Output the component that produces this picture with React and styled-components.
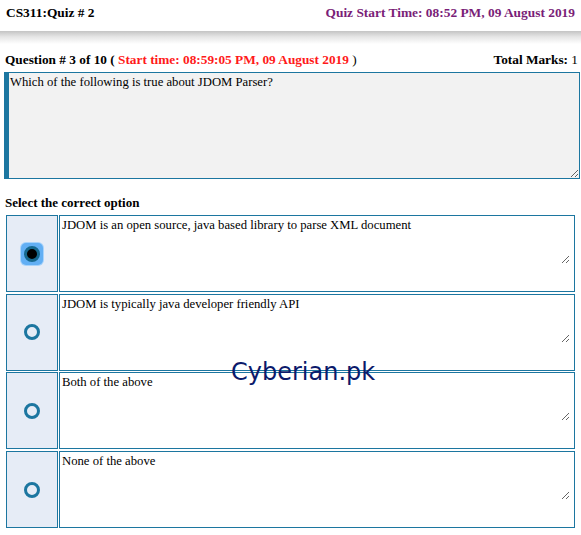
import styled, { createGlobalStyle } from "styled-components";

const Global = createGlobalStyle`
  body {
    margin: 0;
    background: #ffffff;
    font-family: "Liberation Serif", "Times New Roman", serif;
    color: #000;
  }
`;

/* ===== Page ===== */
const Page = styled.div`
  position: relative;
  width: 581px;
`;

/* ===== Top header ===== */
const Header = styled.header`
  display: flex;
  justify-content: space-between;
  align-items: center;
  height: 26px;
  padding: 0 6px 0 6px;
  font-size: 13.4px;
  font-weight: 700;
`;

const QuizTitle = styled.span`
  color: #000;
`;

const QuizTime = styled.span`
  color: #7a1e78;
`;

const ShadowBar = styled.div`
  height: 13px;
  margin-top: 5px;
  background: linear-gradient(180deg, #c4c4c4 0%, #e6e6e6 45%, #ffffff 100%);
`;

/* ===== Question meta ===== */
const MetaRow = styled.div`
  display: flex;
  justify-content: space-between;
  align-items: center;
  margin-top: 8px;
  padding: 0 3px 0 5px;
  font-size: 13.3px;
  font-weight: 700;
  height: 16px;
  color: #000;
`;

const Red = styled.span`
  color: #ff1a1a;
`;

const Plain = styled.span`
  font-weight: 400;
  color: #000;
`;

const QuestionBox = styled.textarea`
  display: block;
  box-sizing: border-box;
  width: 576px;
  height: 107px;
  margin: 4px 0 0 4px;
  padding: 2px 1px;
  border: 1px solid #1c76a0;
  border-left: 5px solid #1c76a0;
  border-radius: 0;
  background: #f2f2f2;
  font-family: "Liberation Serif", "Times New Roman", serif;
  font-size: 12.7px;
  color: #000;
  resize: vertical;
  outline: none;
`;

const SectionLabel = styled.div`
  margin: 16px 0 0 5px;
  font-size: 13px;
  font-weight: 700;
  height: 16px;
`;

/* ===== Options ===== */
const OptionList = styled.div`
  display: flex;
  flex-direction: column;
  gap: 1.7px;
  margin: 4px 0 0 6px;
  width: 569px;
`;

const OptionRow = styled.div`
  display: grid;
  grid-template-columns: 52px 1fr;
  gap: 1px;
  height: 77px;
`;

const RadioCell = styled.div`
  box-sizing: border-box;
  display: flex;
  align-items: center;
  justify-content: center;
  border: 1px solid #1c76a0;
  background: #e6ecf6;
`;

const FocusRing = styled.span`
  display: flex;
  align-items: center;
  justify-content: center;
  width: 22px;
  height: 22px;
  border-radius: 5px;
  background: ${({ $on }) => ($on ? "#62aff4" : "transparent")};
  box-shadow: ${({ $on }) => ($on ? "0 0 0 1px #a8d3fb" : "none")};
`;

const Radio = styled.span`
  box-sizing: border-box;
  display: block;
  width: 16px;
  height: 16px;
  border-radius: 50%;
  border: 3px solid ${({ $checked }) => ($checked ? "#16688e" : "#1c76a0")};
  background: ${({ $checked }) => ($checked ? "#000" : "#e6ecf6")};
`;

const AnswerCell = styled.div`
  box-sizing: border-box;
  border: 1px solid #1c76a0;
  background: #ffffff;
  padding: 0 4px 0 0;
`;

const AnswerBox = styled.textarea`
  box-sizing: border-box;
  display: block;
  width: 100%;
  height: 48px;
  margin: 0;
  padding: 2px 2px;
  border: none;
  border-radius: 0;
  background: #ffffff;
  font-family: "Liberation Serif", "Times New Roman", serif;
  font-size: 12.7px;
  color: #000;
  resize: vertical;
  outline: none;
`;

/* ===== Watermark ===== */
const Watermark = styled.div`
  position: absolute;
  left: 231px;
  top: 358px;
  font-family: "DejaVu Sans", Verdana, sans-serif;
  font-size: 24px;
  color: #0b1a6b;
  pointer-events: none;
`;

const options = [
  "JDOM is an open source, java based library to parse XML document",
  "JDOM is typically java developer friendly API",
  "Both of the above",
  "None of the above",
];

export default function App() {
  return (
    <Page>
      <Global />
      <Header>
        <QuizTitle>CS311:Quiz # 2</QuizTitle>
        <QuizTime>Quiz Start Time: 08:52 PM, 09 August 2019</QuizTime>
      </Header>
      <ShadowBar />

      <MetaRow>
        <span>
          Question # 3 of 10 ( <Red>Start time: 08:59:05 PM, 09 August 2019</Red>{" "}
          <Plain>)</Plain>
        </span>
        <span>
          Total Marks: <Plain>1</Plain>
        </span>
      </MetaRow>
      <QuestionBox readOnly defaultValue="Which of the following is true about JDOM Parser?" />

      <SectionLabel>Select the correct option</SectionLabel>
      <OptionList>
        {options.map((text, i) => (
          <OptionRow key={i}>
            <RadioCell>
              <FocusRing $on={i === 0}>
                <Radio $checked={i === 0} />
              </FocusRing>
            </RadioCell>
            <AnswerCell>
              <AnswerBox readOnly defaultValue={text} />
            </AnswerCell>
          </OptionRow>
        ))}
      </OptionList>

      <Watermark>Cyberian.pk</Watermark>
    </Page>
  );
}
